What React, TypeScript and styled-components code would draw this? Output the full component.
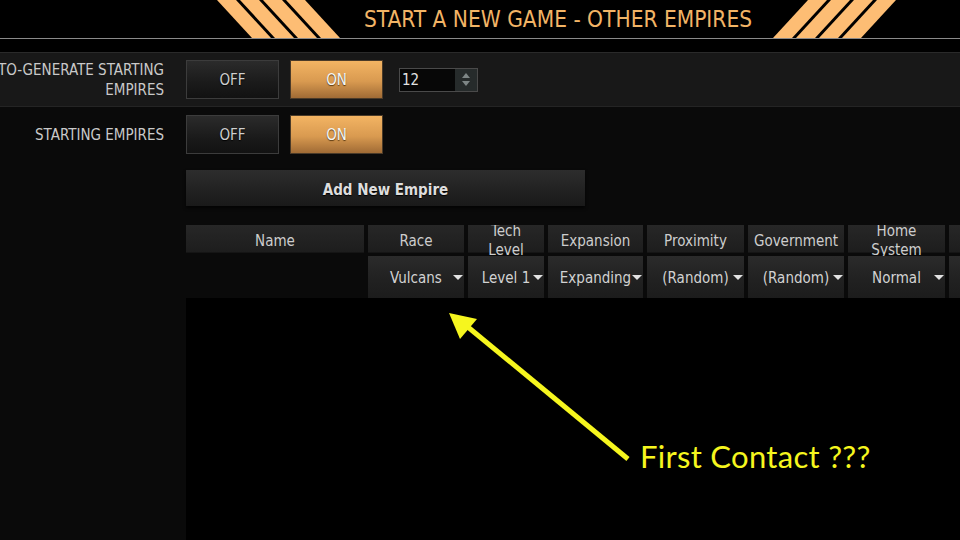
import styled, { createGlobalStyle } from 'styled-components';

const GlobalStyle = createGlobalStyle`
  html, body { margin: 0; padding: 0; background: #000; }
  body {
    font-family: "DejaVu Sans Condensed", "DejaVu Sans", sans-serif;
    font-stretch: condensed;
  }
`;

const Screen = styled.div`
  position: relative;
  width: 960px;
  height: 540px;
  overflow: hidden;
  display: flex;
  flex-direction: column;
  background: #0a0a0a;
`;

const Header = styled.header`
  height: 38px;
  flex-shrink: 0;
  display: flex;
  background: #000;
  border-bottom: 1px solid #8a8a8a;
`;

const Stripes = styled.svg<{ $gap: number }>`
  flex-shrink: 0;
  margin-left: ${({ $gap }) => $gap}px;
`;

const Title = styled.h1`
  margin: 0 0 0 22px;
  font-size: 22.5px;
  font-weight: 400;
  line-height: 38px;
  color: #f2b466;
  white-space: nowrap;
`;

const Spacer = styled.div`
  height: 13px;
  flex-shrink: 0;
  background: #000;
`;

const SettingRow = styled.div<{ $panel?: boolean }>`
  display: flex;
  align-items: center;
  gap: 22px;
  flex-shrink: 0;
  ${({ $panel }) =>
    $panel
      ? `height: 53px;
         background: #181818;
         border-top: 1px solid #2a2a2a;
         border-bottom: 1px solid #242424;`
      : `padding-top: 8px;`}
`;

const Label = styled.div`
  width: 164px;
  flex-shrink: 0;
  display: flex;
  flex-direction: column;
  align-items: flex-end;
  font-size: 15px;
  line-height: 20px;
  color: #c9c9c9;
  text-transform: uppercase;

  span { white-space: nowrap; }
`;

const Controls = styled.div`
  display: flex;
  align-items: center;
  gap: 11px;
`;

const Toggle = styled.button<{ $active?: boolean }>`
  width: 93px;
  height: 39px;
  padding: 0;
  font-family: inherit;
  font-stretch: condensed;
  font-size: 15px;
  border: 1px solid ${({ $active }) => ($active ? '#4a3a28' : '#3c3c3c')};
  background: ${({ $active }) =>
    $active
      ? 'linear-gradient(#f3b463, #d99a50 55%, #a06b35)'
      : 'linear-gradient(#2b2b2b, #1a1a1a 60%, #121212)'};
  color: ${({ $active }) => ($active ? '#f6f6f6' : '#cfcfcf')};
  text-shadow: ${({ $active }) => ($active ? '0 1px 1px #5a3a12' : '0 1px 1px #000')};
  cursor: pointer;
`;

const SpinBox = styled.div`
  display: flex;
  height: 24px;
  width: 79px;
  margin-left: 5px;
  border: 1px solid #4a4a4a;
  box-sizing: border-box;
`;

const SpinValue = styled.div`
  flex: 1;
  background: #070707;
  color: #e2e2e2;
  font-size: 15px;
  line-height: 22px;
  padding-left: 2px;
`;

const SpinArrows = styled.div`
  width: 22px;
  background: #262b2b;
  display: flex;
  flex-direction: column;
  align-items: center;
  justify-content: center;
  gap: 3px;
`;

const SpinArrow = styled.div<{ $up?: boolean }>`
  width: 0;
  height: 0;
  border-left: 4px solid transparent;
  border-right: 4px solid transparent;
  ${({ $up }) => ($up ? 'border-bottom' : 'border-top')}: 5px solid #7e8686;
`;

const Indented = styled.div`
  margin-left: 186px;
  display: flex;
  flex-direction: column;
`;

const AddButton = styled.button`
  margin-top: 16px;
  width: 399px;
  height: 36px;
  padding: 3px 0 0;
  border: none;
  background: linear-gradient(#2d2d2d, #212121 60%, #1a1a1a);
  box-shadow: 0 2px 3px rgba(0, 0, 0, 0.7);
  color: #dedede;
  font-family: inherit;
  font-stretch: condensed;
  font-size: 15px;
  font-weight: 700;
  text-shadow: 0 1px 1px #000;
  cursor: pointer;
`;

const Table = styled.div`
  flex: 1;
  margin-left: 186px;
  margin-top: 19px;
  display: flex;
  flex-direction: column;
  overflow: hidden;
`;

const TableRow = styled.div<{ $head?: boolean }>`
  display: flex;
  gap: 4px;
  flex-shrink: 0;
  height: ${({ $head }) => ($head ? 28 : 42)}px;
  margin-top: ${({ $head }) => ($head ? 0 : 3)}px;
`;

const HeadCell = styled.div<{ $w: number }>`
  width: ${({ $w }) => $w}px;
  flex-shrink: 0;
  display: flex;
  flex-direction: column;
  align-items: center;
  justify-content: center;
  padding-top: 4px;
  box-sizing: border-box;
  background: linear-gradient(#272727, #1d1d1d);
  box-shadow: inset 0 -1px 0 #151515;
  font-size: 15px;
  line-height: 19px;
  color: #cdcdcd;
  white-space: nowrap;
  clip-path: inset(0 0 -20px 0);
`;

const DataCell = styled.div<{ $w: number; $empty?: boolean }>`
  position: relative;
  width: ${({ $w }) => $w}px;
  flex-shrink: 0;
  display: flex;
  align-items: center;
  justify-content: center;
  padding-top: 2px;
  box-sizing: border-box;
  background: ${({ $empty }) => ($empty ? 'transparent' : 'linear-gradient(#2b2b2b, #222 50%, #1c1c1c)')};
  font-size: 15px;
  color: #d2d2d2;
  white-space: nowrap;
`;

const Caret = styled.span`
  position: absolute;
  right: 1px;
  top: 19px;
  width: 0;
  height: 0;
  border-left: 5px solid transparent;
  border-right: 5px solid transparent;
  border-top: 5px solid #e2e2e2;
`;

const TableBody = styled.div`
  flex: 1;
  background: #000;
`;

const Annotation = styled.svg`
  position: absolute;
  left: 0;
  top: 0;
  pointer-events: none;
`;

const Callout = styled.div`
  position: absolute;
  left: 640px;
  top: 441px;
  font-family: Lato, "Open Sans", sans-serif;
  font-stretch: normal;
  font-size: 31px;
  line-height: 31px;
  letter-spacing: 0.3px;
  color: #f6f61e;
  white-space: nowrap;
`;

const columns = [
  { w: 178, head: ['Name'], value: null },
  { w: 96, head: ['Race'], value: 'Vulcans' },
  { w: 76, head: ['Tech', 'Level'], value: 'Level 1' },
  { w: 95, head: ['Expansion'], value: 'Expanding' },
  { w: 97, head: ['Proximity'], value: '(Random)' },
  { w: 96, head: ['Government'], value: '(Random)' },
  { w: 97, head: ['Home', 'System'], value: 'Normal' },
  { w: 60, head: [''], value: '' },
];

function StripeGroup({ dir, gap }: { dir: 'down' | 'up'; gap: number }) {
  const bands = [0, 23, 46, 69];
  return (
    <Stripes $gap={gap} width="125" height="38" viewBox="0 0 125 38">
      {bands.map((x) =>
        dir === 'down' ? (
          <polygon key={x} points={`${x},0 ${x + 19},0 ${x + 54},38 ${x + 35},38`} fill="#fdbd74" />
        ) : (
          <polygon key={x} points={`${x + 35},0 ${x + 54},0 ${x + 19},38 ${x},38`} fill="#fdbd74" />
        )
      )}
    </Stripes>
  );
}

export default function App() {
  return (
    <>
      <GlobalStyle />
      <Screen>
        <Header>
          <StripeGroup dir="down" gap={217} />
          <Title>START A NEW GAME - OTHER EMPIRES</Title>
          <StripeGroup dir="up" gap={21} />
        </Header>
        <Spacer />

        <SettingRow $panel>
          <Label>
            <span>AUTO-GENERATE STARTING</span>
            <span>EMPIRES</span>
          </Label>
          <Controls>
            <Toggle>OFF</Toggle>
            <Toggle $active>ON</Toggle>
            <SpinBox>
              <SpinValue>12</SpinValue>
              <SpinArrows>
                <SpinArrow $up />
                <SpinArrow />
              </SpinArrows>
            </SpinBox>
          </Controls>
        </SettingRow>

        <SettingRow>
          <Label>
            <span>STARTING EMPIRES</span>
          </Label>
          <Controls>
            <Toggle>OFF</Toggle>
            <Toggle $active>ON</Toggle>
          </Controls>
        </SettingRow>

        <Indented>
          <AddButton>Add New Empire</AddButton>
        </Indented>

        <Table>
          <TableRow $head>
            {columns.map((c, i) => (
              <HeadCell key={i} $w={c.w}>
                {c.head.map((line) => (
                  <span key={line}>{line}</span>
                ))}
              </HeadCell>
            ))}
          </TableRow>
          <TableRow>
            {columns.map((c, i) => (
              <DataCell key={i} $w={c.w} $empty={c.value === null}>
                {c.value}
                {c.value && <Caret />}
              </DataCell>
            ))}
          </TableRow>
          <TableBody />
        </Table>

        <Annotation width="960" height="540" viewBox="0 0 960 540">
          <line x1="628" y1="459" x2="463" y2="323" stroke="#f6f61e" strokeWidth="5" />
          <polygon points="449,313 477,319 460,339" fill="#f6f61e" />
        </Annotation>
        <Callout>First Contact ???</Callout>
      </Screen>
    </>
  );
}
